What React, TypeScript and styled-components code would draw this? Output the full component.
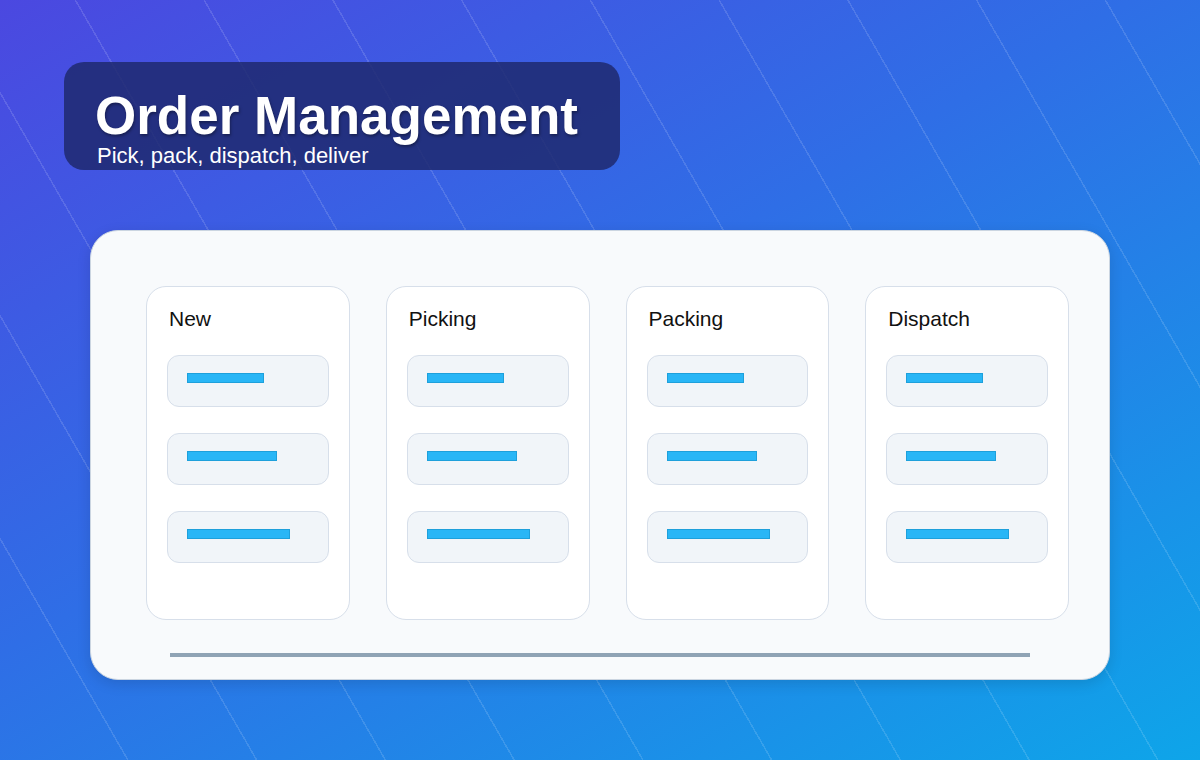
import React from "react";
import styled, { createGlobalStyle } from "styled-components";

const GlobalStyle = createGlobalStyle`
  body { margin: 0; font-family: "Liberation Sans", Arial, sans-serif; }
`;

const columns = ["New", "Picking", "Packing", "Dispatch"];
const barWidths = [77, 90, 103];

const App = () => {
  return (
    <Page>
      <GlobalStyle />
      <Header>
        <Title>Order Management</Title>
        <Subtitle>Pick, pack, dispatch, deliver</Subtitle>
      </Header>
      <Board>
        <Columns>
          {columns.map((name) => (
            <Column key={name}>
              <ColumnTitle>{name}</ColumnTitle>
              {barWidths.map((w) => (
                <Card key={w}>
                  <Bar $width={w} />
                </Card>
              ))}
            </Column>
          ))}
        </Columns>
        <Track />
      </Board>
    </Page>
  );
};
export default App;

const Page = styled.div`
  width: 1200px;
  height: 760px;
  overflow: hidden;
  box-sizing: border-box;
  padding: 62px 0 0 64px;
  background:
    repeating-linear-gradient(
      60deg,
      transparent 0 110px,
      rgba(255, 255, 255, 0.13) 110px 111.5px
    ),
    linear-gradient(150deg, #4b48e0 0%, #2f6ee6 45%, #0ea5e9 100%);
`;

const Header = styled.div`
  width: 556px;
  height: 108px;
  box-sizing: border-box;
  padding: 26px 0 0 31px;
  border-radius: 20px;
  background: rgba(30, 41, 110, 0.85);
  color: #fff;
`;

const Title = styled.div`
  font-size: 53px;
  font-weight: bold;
  line-height: 56px;
  text-shadow: 1px 2px 3px rgba(0, 0, 0, 0.35);
`;

const Subtitle = styled.div`
  font-size: 22px;
  line-height: 24px;
  margin-top: 0;
  padding-left: 2px;
`;

const Board = styled.div`
  width: 1020px;
  height: 450px;
  box-sizing: border-box;
  margin: 60px 0 0 26px;
  padding: 55px 40px 0 55px;
  border-radius: 28px;
  background: #f8fafc;
  border: 1px solid #cbd5e1;
  box-shadow: 0 4px 14px rgba(0, 0, 0, 0.12);
`;

const Columns = styled.div`
  display: flex;
  gap: 36px;
`;

const Column = styled.div`
  width: 204px;
  height: 334px;
  box-sizing: border-box;
  padding: 19px 20px 0 20px;
  background: #fff;
  border: 1.5px solid #d7dfea;
  border-radius: 20px;
  display: flex;
  flex-direction: column;
  gap: 26px;
`;

const ColumnTitle = styled.div`
  font-size: 21px;
  color: #111;
  padding-left: 2px;
  line-height: 26px;
  margin-bottom: -3px;
`;

const Card = styled.div`
  height: 52px;
  box-sizing: border-box;
  padding: 17px 19px 0;
  background: #f1f5f9;
  border: 1px solid #d7dfea;
  border-radius: 12px;
`;

const Bar = styled.div<{ $width: number }>`
  width: ${(p) => p.$width}px;
  height: 10px;
  box-sizing: border-box;
  background: #29b6f6;
  border: 1px solid #1ea0db;
`;

const Track = styled.div`
  margin: 33px 0 0 24px;
  width: 860px;
  height: 4px;
  background: #8fa3b5;
`;
